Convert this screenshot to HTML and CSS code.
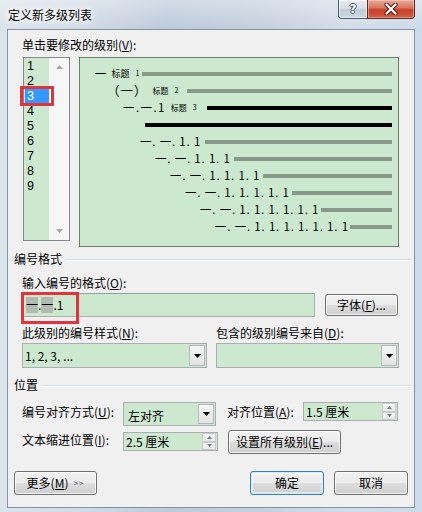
FILE: index.html
```html
<!DOCTYPE html>
<html lang="zh-CN">
<head>
<meta charset="utf-8">
<title>定义新多级列表</title>
<link rel="stylesheet" href="styles.css">
</head>
<body>
<div class="window">
  <div class="titlebar">
    <span class="title">定义新多级列表</span>
    <div class="caption">
      <div class="cbtn help"><span class="q">?</span></div>
      <div class="cbtn close">
        <svg width="14" height="12" viewBox="0 0 14 12"><path d="M2.5 1.5 L11.5 10.5 M11.5 1.5 L2.5 10.5" stroke="#4a1e16" stroke-width="4.2" stroke-linecap="round"/><path d="M2.5 1.5 L11.5 10.5 M11.5 1.5 L2.5 10.5" stroke="#fff" stroke-width="2.2" stroke-linecap="round"/></svg>
      </div>
    </div>
  </div>

  <div class="client">
    <div class="pick-label">单击要修改的级别(<u>V</u>):</div>

    <div class="levels">
      <div class="levellist">
        <div class="items">
          <div class="item">1</div>
          <div class="item">2</div>
          <div class="item sel">3</div>
          <div class="item">4</div>
          <div class="item">5</div>
          <div class="item">6</div>
          <div class="item">7</div>
          <div class="item">8</div>
          <div class="item">9</div>
        </div>
        <div class="vscroll">
          <svg width="7" height="4" viewBox="0 0 7 4"><path d="M0 4 L3.5 0 L7 4Z" fill="#a6a6a6"/></svg>
          <svg width="7" height="4" viewBox="0 0 7 4"><path d="M0 0 L7 0 L3.5 4Z" fill="#a6a6a6"/></svg>
        </div>
      </div>

      <div class="preview">
        <div class="prow r1"><span class="t"><span class="dash">一</span><span class="h h1">标题</span><span class="n">1</span></span><span class="bar"></span></div>
        <div class="prow r2"><span class="t"><span class="paren">（一）</span><span class="h">标题</span><span class="n">2</span></span><span class="bar"></span></div>
        <div class="prow r3"><span class="t"><span class="num3">一.一.1</span><span class="h">标题</span><span class="n">3</span></span><span class="bar dark"></span></div>
        <div class="prow r4"><span class="bar dark"></span></div>
        <div class="prow r5"><span class="t">一. 一. 1. 1</span><span class="bar"></span></div>
        <div class="prow r6"><span class="t">一. 一. 1. 1. 1</span><span class="bar"></span></div>
        <div class="prow r7"><span class="t">一. 一. 1. 1. 1. 1</span><span class="bar"></span></div>
        <div class="prow r8"><span class="t">一. 一. 1. 1. 1. 1. 1</span><span class="bar"></span></div>
        <div class="prow r9"><span class="t">一. 一. 1. 1. 1. 1. 1. 1</span><span class="bar"></span></div>
        <div class="prow r10"><span class="t">一. 一. 1. 1. 1. 1. 1. 1. 1</span><span class="bar"></span></div>
      </div>
    </div>

    <div class="group g1"><span>编号格式</span><span class="rule"></span></div>

    <div class="fmt-label">输入编号的格式(<u>O</u>):</div>
    <div class="fmt-row">
      <div class="fmt-input"><span class="shade">一</span>.<span class="shade">一</span>.1</div>
      <div class="btn font-btn">字体(<u>F</u>)...</div>
    </div>

    <div class="cols lbls">
      <div>此级别的编号样式(<u>N</u>):</div>
      <div>包含的级别编号来自(<u>D</u>):</div>
    </div>
    <div class="cols combos">
      <div class="combo"><span class="val">1, 2, 3, ...</span><span class="drop"><svg width="7" height="4" viewBox="0 0 7 4"><path d="M0 0 L7 0 L3.5 4Z" fill="#000"/></svg></span></div>
      <div class="combo"><span class="val"></span><span class="drop"><svg width="7" height="4" viewBox="0 0 7 4"><path d="M0 0 L7 0 L3.5 4Z" fill="#000"/></svg></span></div>
    </div>

    <div class="group g2"><span>位置</span><span class="rule"></span></div>

    <div class="pos-row ra">
      <div class="plabel">编号对齐方式(<u>U</u>):</div>
      <div class="combo small"><span class="val low">左对齐</span><span class="drop"><svg width="7" height="4" viewBox="0 0 7 4"><path d="M0 0 L7 0 L3.5 4Z" fill="#000"/></svg></span></div>
      <div class="plabel2">对齐位置(<u>A</u>):</div>
      <div class="spin"><span class="val">1.5 厘米</span><span class="arrows"><span class="sa"><svg width="5" height="3" viewBox="0 0 5 3"><path d="M0 3 L2.5 0 L5 3Z" fill="#7a7a7a"/></svg></span><span class="sa"><svg width="5" height="3" viewBox="0 0 5 3"><path d="M0 0 L5 0 L2.5 3Z" fill="#7a7a7a"/></svg></span></span></div>
    </div>
    <div class="pos-row rb">
      <div class="plabel">文本缩进位置(<u>I</u>):</div>
      <div class="spin sp2"><span class="val">2.5 厘米</span><span class="arrows"><span class="sa"><svg width="5" height="3" viewBox="0 0 5 3"><path d="M0 3 L2.5 0 L5 3Z" fill="#7a7a7a"/></svg></span><span class="sa"><svg width="5" height="3" viewBox="0 0 5 3"><path d="M0 0 L5 0 L2.5 3Z" fill="#7a7a7a"/></svg></span></span></div>
      <div class="btn all-btn">设置所有级别(<u>E</u>)...</div>
    </div>

    <div class="footer">
      <div class="btn more">更多(<u>M</u>)<span class="gt">&gt;&gt;</span></div>
      <div class="btn ok">确定</div>
      <div class="btn cancel">取消</div>
    </div>
  </div>
</div>
</body>
</html>
```
FILE: styles.css
```css
* { box-sizing: border-box; }
html, body { margin: 0; padding: 0; }
body {
  width: 422px;
  height: 512px;
  overflow: hidden;
  font-family: "Noto Sans CJK SC", "Noto Sans", sans-serif;
  font-size: 12px;
  line-height: 16px;
  color: #000;
  background: #c9d6e3;
}
u { text-decoration: underline; text-underline-offset: 1px; }

.window {
  width: 422px;
  height: 512px;
  display: flex;
  flex-direction: column;
  padding: 0 7px 4px 7px;
  background:
    linear-gradient(to bottom, rgba(255,255,255,.35), rgba(255,255,255,0) 28px),
    linear-gradient(to right, #dbe3eb 0%, #d2dbe5 18%, #bccada 40%, #c4d0dd 62%, #d3dde8 82%, #cbdbeb 100%);
}

/* title bar */
.titlebar {
  height: 29px;
  flex: none;
  display: flex;
  align-items: flex-start;
  padding-left: 1px;
}
.title {
  margin-top: 7px;
  text-shadow: 0 0 5px #fff, 0 0 9px #fff, 0 0 12px #fff;
}
.caption { margin-left: auto; display: flex; }
.cbtn {
  height: 19px;
  display: flex;
  align-items: center;
  justify-content: center;
  border: 1px solid #4e5a68;
  border-top: none;
}
.help {
  width: 29px;
  border-right: none;
  border-radius: 0 0 0 4px;
  background: linear-gradient(#e8edf2 0%, #d6dee7 45%, #bfcad6 55%, #cdd8e3 100%);
  box-shadow: inset 0 0 0 1px rgba(255,255,255,.55);
}
.q {
  font-family: "DejaVu Sans", sans-serif;
  font-weight: bold;
  font-size: 12px;
  line-height: 12px;
  color: #fff;
  text-shadow: 1px 0 #3d4a5a, -1px 0 #3d4a5a, 0 1px #3d4a5a, 0 -1px #3d4a5a;
}
.close {
  width: 48px;
  border-radius: 0 0 4px 0;
  border-color: #5a2a20;
  background: linear-gradient(#e8ab9b 0%, #d9765f 42%, #c7412a 55%, #d25c43 100%);
  box-shadow: inset 0 0 0 1px rgba(255,210,200,.5);
}

/* client */
.client {
  flex: 1;
  background: #f0f0f0;
  border: 1px solid #8494a6;
  display: flex;
  flex-direction: column;
  overflow: hidden;
}
.pick-label { margin: 7px 0 0 14px; white-space: nowrap; }

.levels {
  display: flex;
  align-items: flex-start;
  margin: 4px 0 0 15px;
  gap: 9px;
}
.levellist {
  width: 47px;
  height: 184px;
  border: 1px solid #828790;
  background: #cce8cf;
  display: flex;
}
.items {
  width: 25px;
  padding-top: 1px;
  font-family: "Liberation Sans", Arial, sans-serif;
  font-size: 12.5px;
  line-height: 15px;
}
.item { height: 15px; margin-left: 1px; padding-left: 2px; }
.item.sel { background: #3399ff; color: #fff; position: relative; }
.item.sel::after {
  content: "";
  position: absolute;
  left: -5px; right: -5px; top: -3px; bottom: -2px;
  border: 3px solid #e2343f;
}
.vscroll {
  width: 20px;
  background: #f5f6f5;
  display: flex;
  flex-direction: column;
  justify-content: space-between;
  align-items: center;
  padding: 7px 0;
}
.vscroll svg { display: block; }

.preview {
  width: 320px;
  height: 190px;
  border: 1px solid #6f7f6f;
  background: #cce8cf;
  padding: 7px 6px 0 0;
}
.prow {
  display: flex;
  align-items: center;
  height: 17px;
  white-space: nowrap;
}
.prow .t {
  flex: none;
  overflow: hidden;
  font-size: 11.5px;
  line-height: 17px;
  display: flex;
  align-items: center;
}
.r5 .t, .r6 .t, .r7 .t, .r8 .t, .r9 .t, .r10 .t { letter-spacing: 0.8px; }
.bar { flex: 1; height: 4px; background: #879a87; }
.bar.dark { background: #000; }
.h { font-size: 8px; margin-left: 5px; }
.h1 { font-size: 9px; }
.n { font-size: 7px; margin-left: 6px; }
.paren { font-size: 12.5px; letter-spacing: 1px; }
.num3 { letter-spacing: 1.4px; }

.r1 { padding-left: 15px; } .r1 .t { width: 47px; }
.r2 { padding-left: 27px; } .r2 .t { width: 80px; }
.r3 { padding-left: 43px; } .r3 .t { width: 84px; }
.r4 { padding-left: 65px; }
.r5 { padding-left: 60px; } .r5 .t { width: 65px; }
.r6 { padding-left: 75px; } .r6 .t { width: 79px; }
.r7 { padding-left: 90px; } .r7 .t { width: 93px; }
.r8 { padding-left: 105px; } .r8 .t { width: 107px; }
.r9 { padding-left: 120px; } .r9 .t { width: 121px; }
.r10 { padding-left: 135px; } .r10 .t { width: 135px; }

/* groups */
.group {
  display: flex;
  align-items: center;
  margin: 4px 3px 0 6px;
}
.group.g2 { margin-top: 9px; }
.rule {
  flex: 1;
  margin: 2px 0 0 3px;
  border-top: 1px solid #d5dfe5;
  border-bottom: 1px solid #fff;
}

.fmt-label { margin: 8px 0 0 14px; }
.fmt-row {
  display: flex;
  align-items: center;
  gap: 10px;
  margin: 2px 0 0 14px;
}
.fmt-input {
  width: 293px;
  height: 24px;
  border: 1px solid #abadb3;
  border-top-color: #9a9ca3;
  background: #cce8cf;
  padding-left: 3px;
  display: flex;
  align-items: center;
  position: relative;
}
.fmt-input::after {
  content: "";
  position: absolute;
  left: -2px; top: -2px;
  width: 52px; height: 26px;
  border: 3px solid #e2343f;
}
.shade { background: #b2bab2; }

/* buttons */
.btn {
  height: 24px;
  border: 1px solid #707070;
  border-radius: 3px;
  background: linear-gradient(#f2f2f2 0%, #ebebeb 48%, #dddddd 52%, #cfcfcf 100%);
  box-shadow: inset 0 0 0 1px rgba(255,255,255,.75);
  display: flex;
  align-items: center;
  justify-content: center;
  white-space: nowrap;
}
.font-btn { width: 73px; height: 22px; }

.cols {
  display: grid;
  grid-template-columns: 185px 183px;
  column-gap: 9px;
  margin-left: 14px;
}
.cols.lbls { margin-top: 8px; }
.cols.combos { margin-top: 2px; }

.combo {
  height: 25px;
  display: flex;
  border: 1px solid #abadb3;
  background: #cce8cf;
}
.combo .val {
  flex: 1;
  padding-left: 2px;
  display: flex;
  align-items: center;
  white-space: nowrap;
}
.combo .val.low { padding-top: 3px; padding-left: 4px; }
.drop {
  width: 16px;
  margin: 1px 1px 1px 0;
  border: 1px solid #b5b7bc;
  background: linear-gradient(#f6f6f6, #e2e2e2);
  display: flex;
  align-items: center;
  justify-content: center;
}
.drop svg { display: block; }

.pos-row {
  display: flex;
  align-items: flex-start;
  margin-left: 14px;
}
.pos-row.ra { margin-top: 9px; }
.pos-row.rb { margin-top: 4px; }
.plabel { width: 101px; margin-top: 2px; white-space: nowrap; }
.combo.small { width: 93px; height: 24px; }
.plabel2 { width: 76px; margin: 2px 0 0 11px; white-space: nowrap; }

.spin {
  width: 95px;
  height: 19px;
  display: flex;
  border: 1px solid #abadb3;
  background: #cce8cf;
}
.spin .val { flex: 1; padding-left: 2px; display: flex; align-items: center; white-space: nowrap; }
.spin.sp2 { margin-top: 2px; }
.arrows {
  width: 14px;
  margin: 0 1px 0 0;
  display: flex;
  flex-direction: column;
}
.sa {
  flex: 1;
  border: 1px solid #c9cbcf;
  background: linear-gradient(#f7f7f7, #e8e8e8);
  display: flex;
  align-items: center;
  justify-content: center;
}
.sa svg { display: block; }
.all-btn { width: 113px; margin-left: 10px; }

.footer {
  display: flex;
  margin: 17px 6px 0 6px;
}
.more { width: 83px; }
.gt { font-size: 8px; letter-spacing: 1px; margin-left: 5px; color: #333; }
.ok {
  width: 74px;
  margin-left: auto;
  border-color: #3c7fb1;
  box-shadow: inset 0 0 0 1px #cdeefc, inset 0 0 0 2px rgba(255,255,255,.5);
}
.cancel { width: 74px; margin-left: 10px; }
```
